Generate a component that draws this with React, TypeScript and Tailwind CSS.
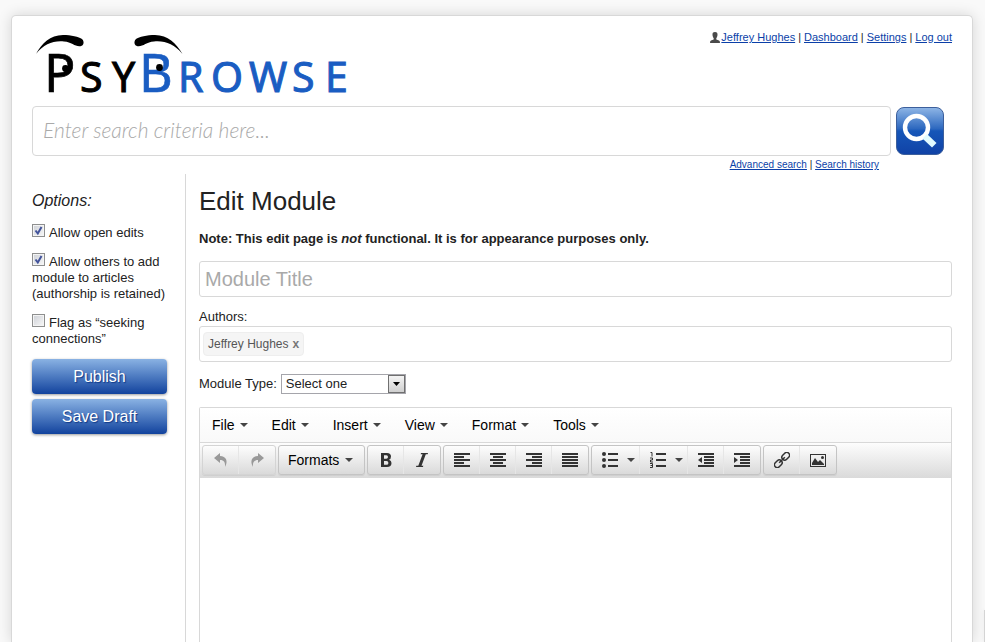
import type { ReactNode } from 'react';

function Caret() {
  return (
    <svg className="h-1 w-2 shrink-0" viewBox="0 0 8 4" aria-hidden="true">
      <path d="M0 0h8L4 4z" fill="#444" />
    </svg>
  );
}

function Logo() {
  return (
    <svg className="block h-[80px] w-[320px]" viewBox="32 30 320 80" role="img" aria-label="PsyBrowse">
      <path d="M36 54C42 43 50 35.300 63 35C71 35 79 37 82 39C84.500 41.500 84 45.500 80.500 46.200C75 47 72 42 64 41.500C53 40.500 44 44 36 54Z" fill="#000" />
      <path d="M182.500 54C176 43 168 35.300 155 35C147 35 139 37 136 39C133.500 41.500 134 45.500 137.500 46.200C143 47 146 42 154 41.500C165 40.500 174 44 182.500 54Z" fill="#000" />
      <g fontFamily="'Noto Sans', sans-serif" fill="#000" stroke="#000">
        <text x="44" y="92" fontSize="52" strokeWidth=".6">P</text>
        <text x="80 112" y="92" fontSize="41">SY</text>
      </g>
      <g fontFamily="'Noto Sans', sans-serif" fill="#1a5dc2" stroke="#1a5dc2">
        <text x="139" y="92" fontSize="52" strokeWidth=".6">B</text>
        <text x="178 211 249 292 325" y="92" fontSize="41">ROWSE</text>
      </g>
      <circle cx="65.500" cy="68.500" r="3.400" fill="#000" />
      <circle cx="159.500" cy="67.500" r="3.400" fill="#000" />
    </svg>
  );
}

const link = 'text-[#0b3fa8] underline';

function Separator() {
  return <span className="mx-[2px] px-px">|</span>;
}

function Option({ id, checked, children }: { id: string; checked?: boolean; children: ReactNode }) {
  return (
    <div className="mb-3 leading-4">
      <span className="relative mr-1 inline-block h-[13px] w-[13px]">
        <input
          id={id}
          type="checkbox"
          defaultChecked={checked}
          className="peer block h-[13px] w-[13px] appearance-none border border-[#8e8f8f] bg-gradient-to-br from-[#cdd0d6] to-[#f8f8f8] shadow-[inset_0_0_0_1px_#f4f4f4]"
        />
        <svg className="pointer-events-none absolute inset-0 hidden h-[13px] w-[13px] peer-checked:block" viewBox="0 0 13 13" aria-hidden="true">
          <path d="M3.500 6.500L5.800 9.500L9.500 3" fill="none" stroke="#42539b" strokeWidth="2" />
        </svg>
      </span>
      <label htmlFor={id}>{children}</label>
    </div>
  );
}

function SideButton({ children }: { children: ReactNode }) {
  return (
    <button
      type="button"
      className="mb-[5px] block h-[35px] w-full rounded-[4px] bg-gradient-to-b from-[#8ab2e3] to-[#11429d] text-base text-white shadow-[0_1px_3px_#00000066] [text-shadow:1px_1px_1px_#103a88]"
    >
      {children}
    </button>
  );
}

function Group({ children, faded }: { children: ReactNode; faded?: boolean }) {
  return (
    <div
      className={
        'flex h-[30px] divide-x divide-[#e6e6e6] rounded-[3px] border bg-gradient-to-b from-[#fdfdfd] to-[#dadada] shadow-[0_1px_1px_#00000011] ' +
        (faded ? 'border-[#d4d4d4]' : 'border-[#c4c4c4]')
      }
    >
      {children}
    </div>
  );
}

function Tool({ label, menu, children }: { label: string; menu?: boolean; children: ReactNode }) {
  return (
    <button type="button" aria-label={label} className={'flex items-center ' + (menu ? 'w-12 gap-[9px] pl-[10px]' : 'w-9 justify-center')}>
      <svg className="h-4 w-4 shrink-0" viewBox="0 0 16 16" fill="#333" aria-hidden="true">
        {children}
      </svg>
      {menu && <Caret />}
    </button>
  );
}

const lines = (rows: number[][]) => rows.map(([x, w], i) => <rect key={i} x={x} y={1 + i * 3} width={w} height="2" />);

export default function App() {
  return (
    <div className="flex min-h-screen flex-col bg-[#f9f9f9] pt-[15px] pr-3 pl-[11px] font-['Liberation_Sans',Arial,sans-serif] text-[13px] text-[#222]">
      <div className="flex flex-1 flex-col rounded-t-[5px] border border-b-0 border-[#d8d8d8] bg-white px-5 shadow-[0_0_14px_#00000026]">
        <header>
          <div className="flex items-start justify-between pt-[14px]">
            <Logo />
            <nav className="mt-[1px] flex items-center text-[11px] leading-[13px] text-[#222]" aria-label="Account">
              <svg className="mr-[1px] h-[11px] w-[10px]" viewBox="0 0 10 11" fill="#4a4a4a" aria-hidden="true">
                <path d="M5 0C3 0 2.300 1.300 2.500 3C2.600 4.600 3.300 5.600 3.700 6.200V7.400L1 8.400Q0 8.800 0 11H10Q10 8.800 9 8.400L6.300 7.400V6.200C6.700 5.600 7.400 4.600 7.500 3C7.700 1.300 7 0 5 0Z" />
              </svg>
              <a href="#" className={link}>Jeffrey Hughes</a>
              <Separator />
              <a href="#" className={link}>Dashboard</a>
              <Separator />
              <a href="#" className={link}>Settings</a>
              <Separator />
              <a href="#" className={link}>Log out</a>
            </nav>
          </div>
          <form className="-mt-1 flex items-center gap-[5px] pr-2">
            <input
              type="text"
              aria-label="Search"
              placeholder="Enter search criteria here..."
              className="h-[50px] min-w-0 flex-1 rounded-[4px] border border-[#d8d8d8] bg-white px-[10px] pb-[3px] font-['Lato','Open_Sans',sans-serif] text-[21px] font-light italic placeholder:text-[#aaa]"
            />
            <button type="button" aria-label="Search" className="h-12 w-12 shrink-0">
              <svg className="block h-12 w-12" viewBox="0 0 48 48" aria-hidden="true">
                <defs>
                  <linearGradient id="searchFill" x1="0" y1="0" x2="0" y2="1">
                    <stop offset="0" stopColor="#8fb6e6" />
                    <stop offset=".45" stopColor="#2d68bf" />
                    <stop offset=".5" stopColor="#1656b8" />
                    <stop offset="1" stopColor="#1042a6" />
                  </linearGradient>
                </defs>
                <rect x=".5" y=".5" width="47" height="47" rx="7.500" fill="url(#searchFill)" stroke="#3c5f9c" />
                <circle cx="20.500" cy="20.500" r="11.500" fill="none" stroke="#fff" strokeWidth="4.400" />
                <path d="M27 31L31 27L40.500 36L36 40.500L27 32Z" fill="#e2fbff" />
              </svg>
            </button>
          </form>
          <div className="mt-[3px] pr-[73px] text-right text-[10px] leading-3 text-[#222]">
            <a href="#" className={link}>Advanced search</a>
            {' | '}
            <a href="#" className={link}>Search history</a>
          </div>
        </header>

        <div className="mt-[3px] flex flex-1">
          <aside className="w-[154px] shrink-0 border-r border-[#d8d8d8] pt-[18px] pr-[18px]">
            <h2 className="mb-[14px] text-base leading-[18px] italic">Options:</h2>
            <Option id="open-edits" checked>Allow open edits</Option>
            <Option id="others" checked>Allow others to add module to articles (authorship is retained)</Option>
            <Option id="flag">Flag as “seeking connections”</Option>
            <SideButton>Publish</SideButton>
            <SideButton>Save Draft</SideButton>
          </aside>

          <main className="flex min-w-0 flex-1 flex-col pt-3 pl-[13px]">
            <h1 className="text-[26px] leading-[30px]">Edit Module</h1>
            <p className="mt-[15px] font-bold leading-4">
              Note: This edit page is <em>not</em> functional. It is for appearance purposes only.
            </p>
            <input
              type="text"
              aria-label="Module Title"
              placeholder="Module Title"
              className="mt-[14px] h-9 w-full rounded-[3px] border border-[#d8d8d8] px-[5px] text-xl placeholder:text-[#a9a9a9]"
            />
            <label htmlFor="authors" className="mt-3 mb-[1px] leading-4">Authors:</label>
            <div className="flex h-9 items-center rounded-[3px] border border-[#d8d8d8] px-[3px]">
              <span className="flex h-6 items-center gap-1 rounded-[4px] border border-[#eee] bg-[#f5f5f5] px-1 text-xs text-[#555]">
                Jeffrey Hughes
                <button type="button" aria-label="Remove Jeffrey Hughes" className="font-bold text-[#777]">x</button>
              </span>
              <input id="authors" type="text" className="min-w-0 flex-1 outline-none" />
            </div>
            <div className="mt-3 flex items-center gap-1">
              <label htmlFor="type">Module Type:</label>
              <span className="relative block h-5 w-[125px]">
                <select id="type" className="block h-5 w-full appearance-none border border-[#a5a5ab] bg-white pl-1 text-[13px] leading-4">
                  <option>Select one</option>
                </select>
                <span className="pointer-events-none absolute top-[1px] right-[1px] flex h-[18px] w-[17px] items-center justify-center border border-[#707070] bg-gradient-to-b from-[#f4f4f4] to-[#cfcfcf]">
                  <svg className="h-1 w-[7px]" viewBox="0 0 7 4" aria-hidden="true"><path d="M0 0h7L3.500 4z" /></svg>
                </span>
              </span>
            </div>

            <div className="mt-[13px] flex flex-1 flex-col rounded-t-[2px] border border-b-0 border-[#d8d8d8]">
              <div className="flex h-[35px] items-center border-b border-[#d8d8d8] bg-gradient-to-b from-white to-[#f9f9f9] text-[14px] text-black">
                {['File', 'Edit', 'Insert', 'View', 'Format', 'Tools'].map((m) => (
                  <button key={m} type="button" className="flex h-full items-center gap-[5px] px-3">
                    {m}
                    <Caret />
                  </button>
                ))}
              </div>
              <div className="flex h-[35px] items-start gap-[2px] bg-gradient-to-b from-[#fdfdfd] to-[#dadada] px-[2px] pt-[2px]">
                <Group faded>
                  <Tool label="Undo">
                    <path fill="#999" d="M1 6L7 1V4C13 4 15.500 9 12 15C12.500 10.500 11 8 7 8V11Z" />
                  </Tool>
                  <Tool label="Redo">
                    <path fill="#999" d="M15 6L9 1V4C3 4 .5 9 4 15C3.500 10.500 5 8 9 8V11Z" />
                  </Tool>
                </Group>
                <Group>
                  <button type="button" className="flex items-center gap-[6px] pr-[11px] pl-[9px] text-[14px] text-black">
                    Formats
                    <Caret />
                  </button>
                </Group>
                <Group>
                  <Tool label="Bold">
                    <path fillRule="evenodd" d="M3 1H9Q13 1 13 4.500Q13 7 11 7.700Q13.500 8.500 13.500 11Q13.500 15 9 15H3ZM6 3.200V6.800H8.300Q10 6.800 10 5Q10 3.200 8.300 3.200ZM6 9V12.800H8.500Q10.400 12.800 10.400 10.900Q10.400 9 8.500 9Z" />
                  </Tool>
                  <Tool label="Italic">
                    <path d="M7 1H14L13.700 2.200H11.800L7.500 13.800H9.300L9 15H2L2.300 13.800H4.300L8.600 2.200H6.700Z" />
                  </Tool>
                </Group>
                <Group>
                  <Tool label="Align left">{lines([[0, 16], [0, 10], [0, 16], [0, 10], [0, 16]])}</Tool>
                  <Tool label="Align center">{lines([[0, 16], [3, 10], [0, 16], [3, 10], [0, 16]])}</Tool>
                  <Tool label="Align right">{lines([[0, 16], [6, 10], [0, 16], [6, 10], [0, 16]])}</Tool>
                  <Tool label="Justify">{lines([[0, 16], [0, 16], [0, 16], [0, 16], [0, 16]])}</Tool>
                </Group>
                <Group>
                  <Tool label="Bullet list" menu>
                    <path d="M6 1h10v2H6zM6 7h10v2H6zM6 13h10v2H6z" />
                    <circle cx="2" cy="2" r="2" />
                    <circle cx="2" cy="8" r="2" />
                    <circle cx="2" cy="14" r="2" />
                  </Tool>
                  <Tool label="Numbered list" menu>
                    <path d="M6 1h10v2H6zM6 7h10v2H6zM6 13h10v2H6z" />
                    <path fill="none" stroke="#333" d="M.5 .5H2V4.500M0 6H2.500V8H.5V10H3M0 11.500H2.500V15.500H0M.5 13.500H2.500" />
                  </Tool>
                  <Tool label="Decrease indent">
                    <path d="M0 1h16v2H0zM6 4h10v2H6zM6 7h10v2H6zM6 10h10v2H6zM0 13h16v2H0zM0 8L4 5V11z" />
                  </Tool>
                  <Tool label="Increase indent">
                    <path d="M0 1h16v2H0zM6 4h10v2H6zM6 7h10v2H6zM6 10h10v2H6zM0 13h16v2H0zM4 8L0 5V11z" />
                  </Tool>
                </Group>
                <Group>
                  <Tool label="Insert link">
                    <g fill="none" stroke="#333" strokeWidth="1.500" transform="rotate(-45 8 8)">
                      <rect x="-1.500" y="5.200" width="8.500" height="5.600" rx="2.800" />
                      <rect x="9" y="5.200" width="8.500" height="5.600" rx="2.800" />
                      <path d="M4 8H12" />
                    </g>
                  </Tool>
                  <Tool label="Insert image">
                    <path fillRule="evenodd" d="M0 2H16V15H0ZM1 3V14H15V3Z" />
                    <path d="M2 13V11L5 6L8 10L10 8L14 12V13Z" />
                    <circle cx="12.500" cy="5.500" r="1.500" />
                  </Tool>
                </Group>
              </div>
              <textarea aria-label="Module content" className="block w-full flex-1 resize-none outline-none" />
            </div>
          </main>
        </div>
      </div>
      <div className="fixed right-0 bottom-0 h-8 w-px bg-[#d4d4d4] shadow-[0_0_4px_#00000022]" />
    </div>
  );
}
